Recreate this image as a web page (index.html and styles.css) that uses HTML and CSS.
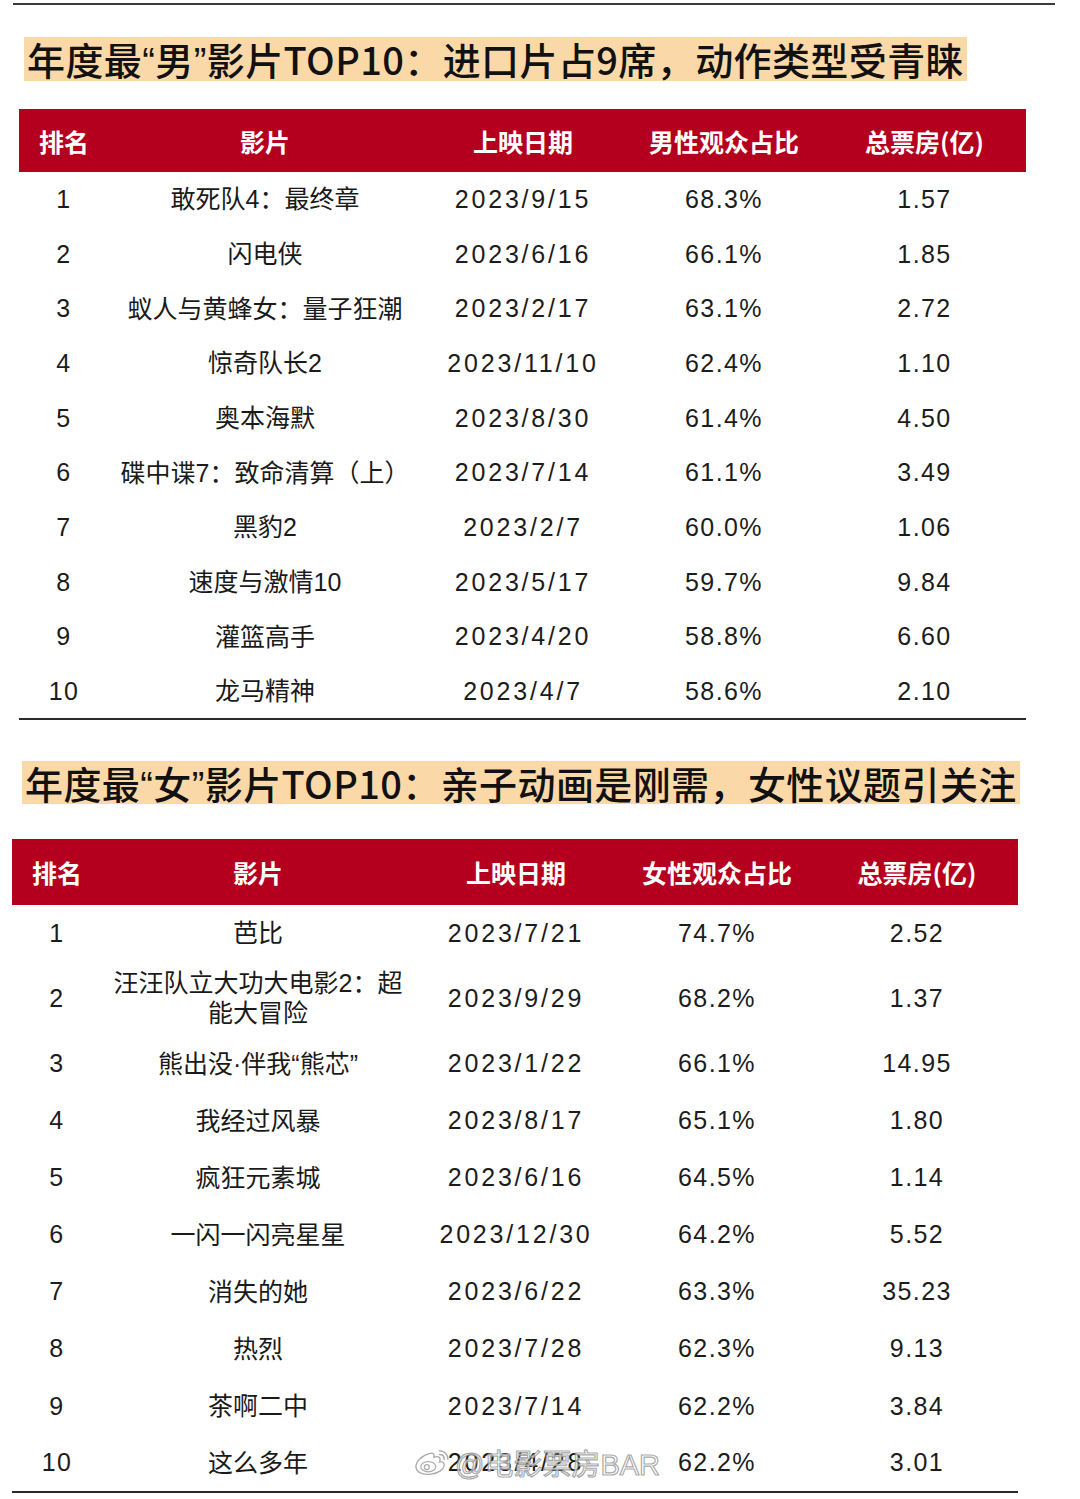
FILE: index.html
```html
<!DOCTYPE html>
<html lang="zh-CN">
<head>
<meta charset="utf-8">
<title>年度最男/最女影片TOP10</title>
<link rel="stylesheet" href="styles.css">
</head>
<body>
<div class="page">
  <div class="topline"></div>

  <section class="block block-male">
    <h2 class="title">年度最<span class="q">“</span>男<span class="q">”</span>影片TOP10：进口片占9席，动作类型受青睐</h2>
    <table class="rank-table">
      <colgroup>
        <col class="c-rank"><col class="c-film"><col class="c-date"><col class="c-pct"><col class="c-box">
      </colgroup>
      <thead>
        <tr><th>排名</th><th>影片</th><th>上映日期</th><th>男性观众占比</th><th>总票房(亿)</th></tr>
      </thead>
      <tbody>
        <tr><td class="num">1</td><td class="film">敢死队4：最终章</td><td class="date">2023/9/15</td><td class="num">68.3%</td><td class="num">1.57</td></tr>
        <tr><td class="num">2</td><td class="film">闪电侠</td><td class="date">2023/6/16</td><td class="num">66.1%</td><td class="num">1.85</td></tr>
        <tr><td class="num">3</td><td class="film">蚁人与黄蜂女：量子狂潮</td><td class="date">2023/2/17</td><td class="num">63.1%</td><td class="num">2.72</td></tr>
        <tr><td class="num">4</td><td class="film">惊奇队长2</td><td class="date">2023/11/10</td><td class="num">62.4%</td><td class="num">1.10</td></tr>
        <tr><td class="num">5</td><td class="film">奥本海默</td><td class="date">2023/8/30</td><td class="num">61.4%</td><td class="num">4.50</td></tr>
        <tr><td class="num">6</td><td class="film">碟中谍7：致命清算（上）</td><td class="date">2023/7/14</td><td class="num">61.1%</td><td class="num">3.49</td></tr>
        <tr><td class="num">7</td><td class="film">黑豹2</td><td class="date">2023/2/7</td><td class="num">60.0%</td><td class="num">1.06</td></tr>
        <tr><td class="num">8</td><td class="film">速度与激情10</td><td class="date">2023/5/17</td><td class="num">59.7%</td><td class="num">9.84</td></tr>
        <tr><td class="num">9</td><td class="film">灌篮高手</td><td class="date">2023/4/20</td><td class="num">58.8%</td><td class="num">6.60</td></tr>
        <tr><td class="num">10</td><td class="film">龙马精神</td><td class="date">2023/4/7</td><td class="num">58.6%</td><td class="num">2.10</td></tr>
      </tbody>
    </table>
  </section>

  <section class="block block-female">
    <h2 class="title">年度最<span class="q">“</span>女<span class="q">”</span>影片TOP10：亲子动画是刚需，女性议题引关注</h2>
    <table class="rank-table">
      <colgroup>
        <col class="c-rank"><col class="c-film"><col class="c-date"><col class="c-pct"><col class="c-box">
      </colgroup>
      <thead>
        <tr><th>排名</th><th>影片</th><th>上映日期</th><th>女性观众占比</th><th>总票房(亿)</th></tr>
      </thead>
      <tbody>
        <tr><td class="num">1</td><td class="film">芭比</td><td class="date">2023/7/21</td><td class="num">74.7%</td><td class="num">2.52</td></tr>
        <tr class="tall"><td class="num">2</td><td class="film">汪汪队立大功大电影2：超能大冒险</td><td class="date">2023/9/29</td><td class="num">68.2%</td><td class="num">1.37</td></tr>
        <tr><td class="num">3</td><td class="film">熊出没·伴我“熊芯”</td><td class="date">2023/1/22</td><td class="num">66.1%</td><td class="num">14.95</td></tr>
        <tr><td class="num">4</td><td class="film">我经过风暴</td><td class="date">2023/8/17</td><td class="num">65.1%</td><td class="num">1.80</td></tr>
        <tr><td class="num">5</td><td class="film">疯狂元素城</td><td class="date">2023/6/16</td><td class="num">64.5%</td><td class="num">1.14</td></tr>
        <tr><td class="num">6</td><td class="film">一闪一闪亮星星</td><td class="date">2023/12/30</td><td class="num">64.2%</td><td class="num">5.52</td></tr>
        <tr><td class="num">7</td><td class="film">消失的她</td><td class="date">2023/6/22</td><td class="num">63.3%</td><td class="num">35.23</td></tr>
        <tr><td class="num">8</td><td class="film">热烈</td><td class="date">2023/7/28</td><td class="num">62.3%</td><td class="num">9.13</td></tr>
        <tr><td class="num">9</td><td class="film">茶啊二中</td><td class="date">2023/7/14</td><td class="num">62.2%</td><td class="num">3.84</td></tr>
        <tr><td class="num">10</td><td class="film">这么多年</td><td class="date">2023/4/28</td><td class="num">62.2%</td><td class="num">3.01</td></tr>
      </tbody>
    </table>
    <div class="watermark">
      <svg class="wm-logo" viewBox="0 0 40 32" width="38" height="30" aria-hidden="true">
        <path d="M17 7 C9 9 2 16 3 22 C4 28 12 30 19 29 C27 28 33 24 33 19 C33 16 30 15 28 16 C30 11 27 9 22 11 C23 7 21 6 17 7 Z" fill="rgba(255,255,255,0.75)" stroke="rgba(150,150,150,0.8)" stroke-width="1.4"/>
        <ellipse cx="16" cy="21" rx="8" ry="5.5" fill="none" stroke="rgba(150,150,150,0.8)" stroke-width="1.3"/>
        <circle cx="14.5" cy="21.5" r="2.6" fill="none" stroke="rgba(150,150,150,0.8)" stroke-width="1.3"/>
        <path d="M28 4 C33 4 37 8 37 13" fill="none" stroke="rgba(150,150,150,0.8)" stroke-width="1.6" stroke-linecap="round"/>
        <path d="M28 8 C31 8 33 10 33 13" fill="none" stroke="rgba(150,150,150,0.8)" stroke-width="1.6" stroke-linecap="round"/>
      </svg>
      <span class="wm-text">@电影票房BAR</span>
    </div>
  </section>
</div>
</body>
</html>
```

FILE: styles.css
```css
* { box-sizing: border-box; }

html, body {
  margin: 0;
  padding: 0;
  background: #ffffff;
}

body {
  width: 1080px;
  font-family: "Liberation Sans", "Noto Sans CJK SC", sans-serif;
  color: #1c1c1c;
}

.page {
  padding-top: 3px;
  position: relative;
}

.topline {
  margin-left: 13px;
  width: 1042px;
  height: 2px;
  background: #3a3a3a;
}

.block {
  position: relative;
}

.title {
  display: block;
  width: fit-content;
  margin: 0;
  padding: 0 3px 0 3px;
  height: 44px;
  line-height: 44px;
  font-family: "Noto Sans CJK SC", sans-serif;
  font-weight: 500;
  font-size: 38px;
  letter-spacing: 0.4px;
  color: #111111;
  background: #fbd8a7;
  white-space: nowrap;
}

.title .q {
  font-family: "Liberation Sans", sans-serif;
  font-weight: 400;
  line-height: 1;
}

.block-male .title {
  margin: 32px 0 0 24px;
}

.block-female .title {
  margin: 41px 0 0 22px;
  height: 43px;
  line-height: 43px;
}

.rank-table {
  table-layout: fixed;
  border-collapse: collapse;
  border-bottom: 2px solid #2a2a2a;
}

.block-male .rank-table {
  margin: 28px 0 0 19px;
  width: 1007px;
}

.block-female .rank-table {
  margin: 35px 0 0 12px;
  width: 1006px;
}

.c-rank { width: 90px; }
.c-film { width: 312px; }
.c-date { width: 204px; }
.c-pct  { width: 198px; }
.c-box  { width: auto; }

.rank-table th {
  background: #b4001e;
  color: #ffffff;
  font-family: "Noto Sans CJK SC", sans-serif;
  font-weight: 700;
  font-size: 25px;
  text-align: center;
  padding: 0;
  height: 63px;
}

.block-female .rank-table th {
  height: 66px;
}

.rank-table td {
  padding: 0;
  text-align: center;
  vertical-align: middle;
  height: 54.7px;
  font-size: 25px;
}

.block-female .rank-table td {
  height: 57.1px;
}

.block-female .rank-table tr.tall td {
  height: 73px;
}

.num {
  letter-spacing: 1.4px;
}

.date {
  letter-spacing: 2.8px;
}

.film {
  font-family: "Liberation Sans", "Noto Sans CJK SC", sans-serif;
  font-size: 26px;
  line-height: 30px;
  color: #1a1a1a;
}

.watermark {
  position: absolute;
  left: 413px;
  bottom: 10px;
  display: flex;
  align-items: center;
  gap: 4px;
  pointer-events: none;
}

.wm-text {
  font-family: "Liberation Sans", "Noto Sans CJK SC", sans-serif;
  font-size: 29px;
  color: rgba(255, 255, 255, 0.7);
  -webkit-text-stroke: 1.2px rgba(140, 140, 140, 0.75);
  letter-spacing: 0;
}
```
